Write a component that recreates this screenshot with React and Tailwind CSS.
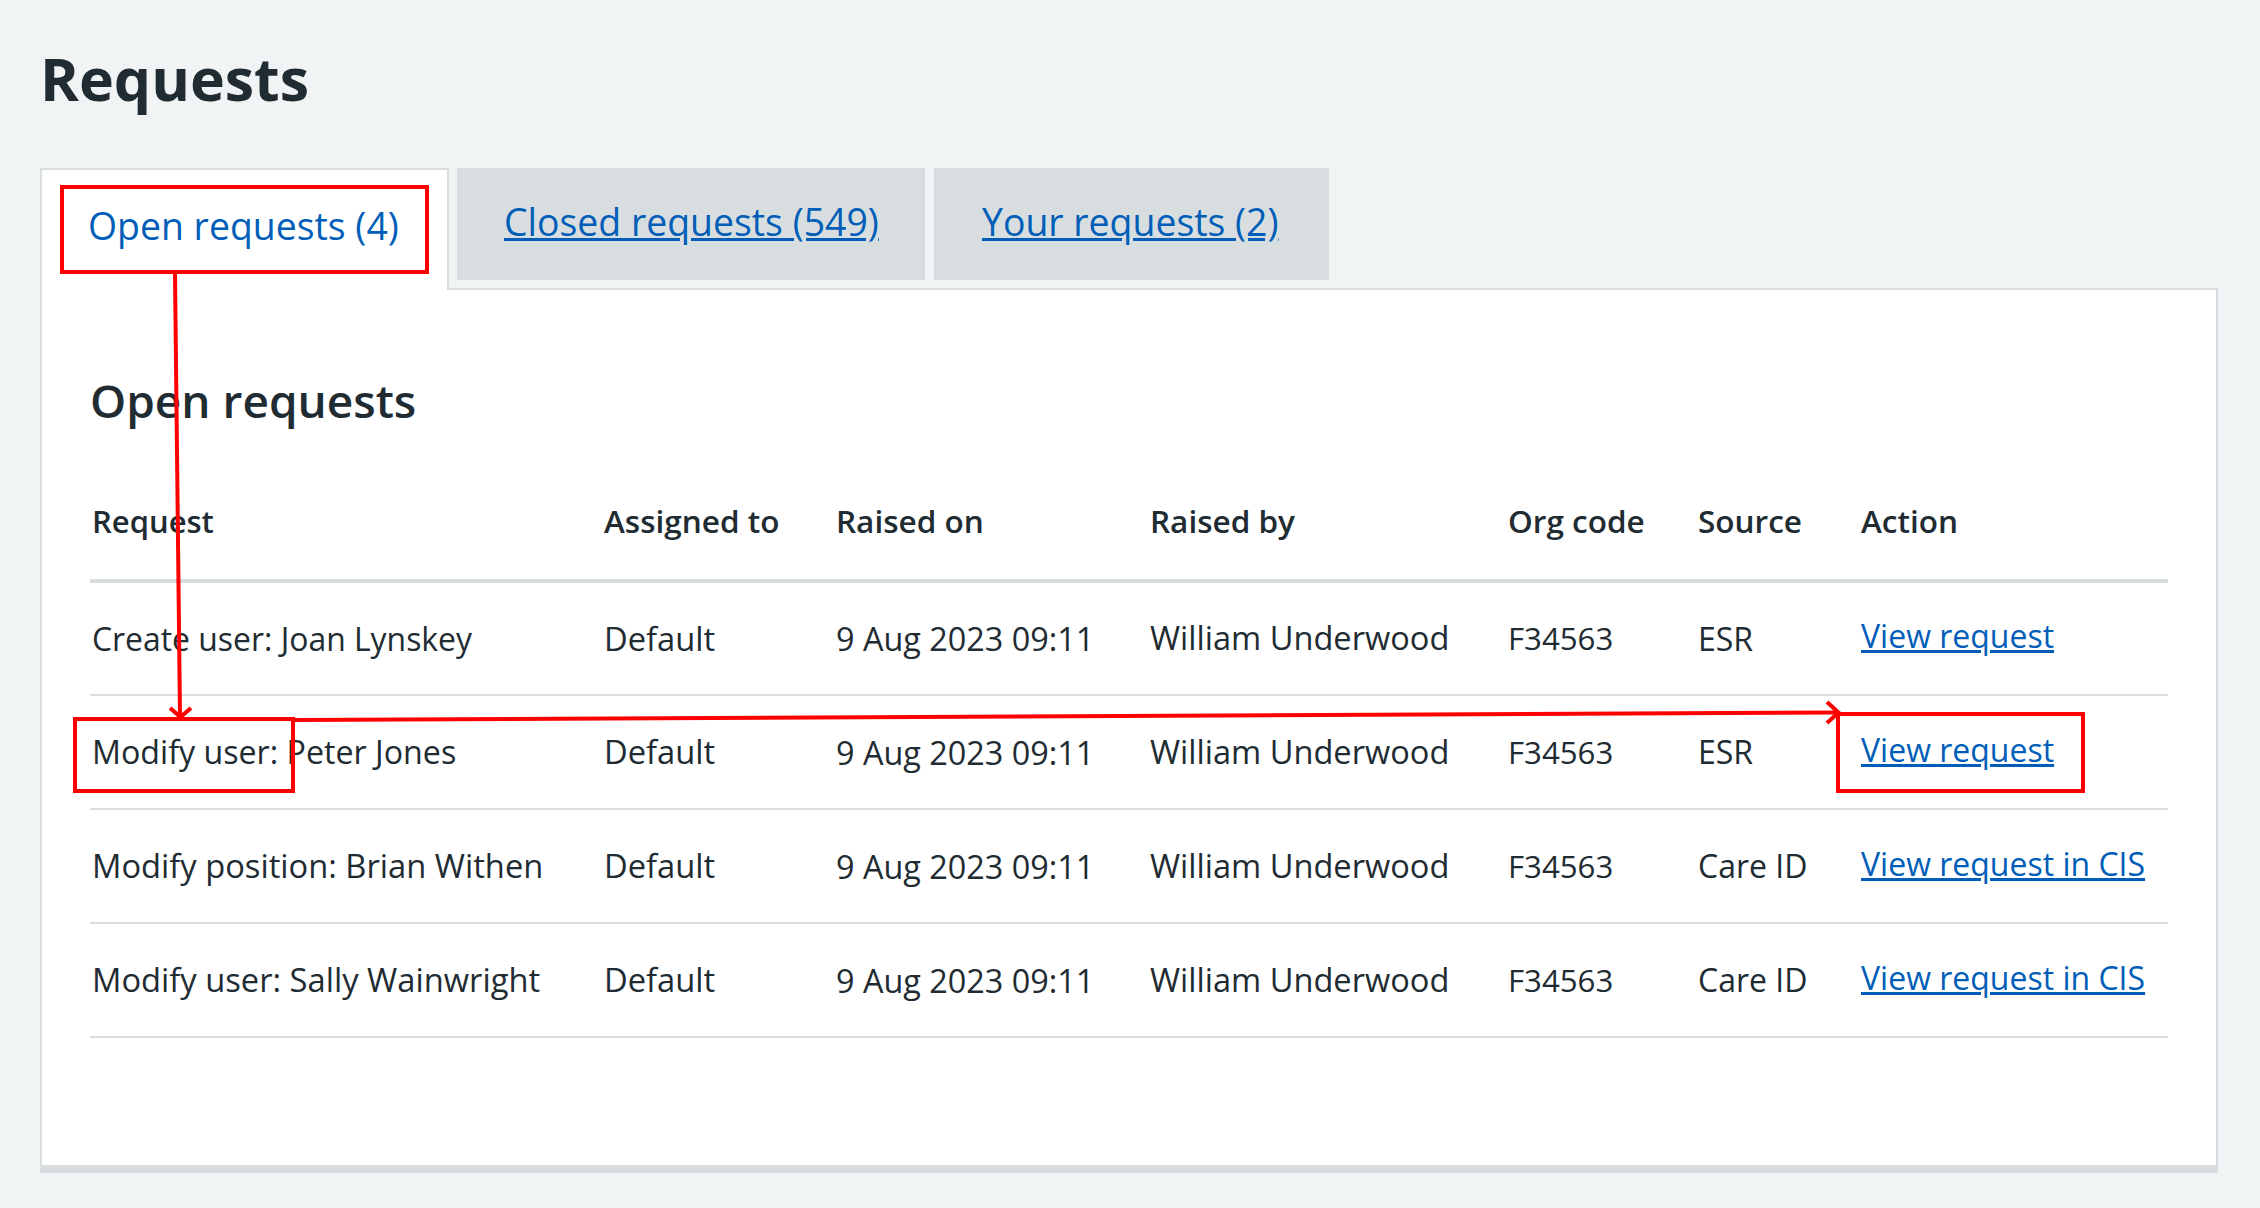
const ROWS = [
  { request: 'Create user: Joan Lynskey', size: 'text-[31.900px]', source: 'ESR', action: 'View request' },
  { request: 'Modify user: Peter Jones', size: 'text-[32.200px]', source: 'ESR', action: 'View request' },
  { request: 'Modify position: Brian Withen', size: 'text-[32.700px]', source: 'Care ID', action: 'View request in CIS' },
  { request: 'Modify user: Sally Wainwright', size: 'text-[32.700px]', source: 'Care ID', action: 'View request in CIS' },
];

const HEADERS = ['Request', 'Assigned to', 'Raised on', 'Raised by', 'Org code', 'Source', 'Action'];

function Annotations() {
  return (
    <>
      <div className="absolute left-[60px] top-[185px] h-[89px] w-[369px] border-4 border-[#ff0000]" />
      <div className="absolute left-[73px] top-[717px] h-[76px] w-[222px] border-4 border-[#ff0000]" />
      <div className="absolute left-[1836px] top-[712px] h-[81px] w-[249px] border-4 border-[#ff0000]" />
      <svg className="absolute left-0 top-0 h-[1208px] w-[2260px]" viewBox="0 0 2260 1208" fill="none" stroke="#ff0000" strokeWidth="4">
        <path d="M175 274 L180 717" />
        <path d="M170 708 L180.500 717 L191 708" />
        <path d="M295 720 L1838 712.500" />
        <path d="M1827 702 L1838.500 712.500 L1827 723" />
      </svg>
    </>
  );
}

export default function App() {
  return (
    <div className="relative min-h-screen bg-[#f0f4f5] pl-[40px] pr-[42px] pt-[46px] font-['Open_Sans',sans-serif] text-[#212b32]">
      <h1 className="mb-[58px] text-[59px] font-bold leading-[64px]">Requests</h1>

      <div className="relative flex gap-2">
        <div className="-mb-[2px] h-[122px] w-[409px] border-2 border-b-0 border-[#d8dde0] bg-white pl-[46px] pt-[28px] text-[37.400px] leading-[56px] text-[#005eb8]">
          Open requests (4)
        </div>
        <div className="h-[112px] w-[468px] bg-[#d8dde0] pl-[47px] pt-[26px] text-[37.400px] leading-[56px]">
          <a href="#" className="text-[#005eb8] underline">Closed requests (549)</a>
        </div>
        <div className="ml-px h-[112px] w-[395px] bg-[#d8dde0] pl-[48px] pt-[26px] text-[37.400px] leading-[56px]">
          <a href="#" className="text-[#005eb8] underline">Your requests (2)</a>
        </div>
      </div>

      <div className="border-2 border-b-8 border-[#d8dde0] bg-white pb-[127px] pl-[48px] pr-[48px] pt-[80px]">
        <h2 className="mb-[36px] text-[46px] font-semibold leading-[60px]">Open requests</h2>
        <table className="w-[2078px] table-fixed border-collapse text-left text-[32px]">
          <colgroup>
            <col className="w-[513px]" />
            <col className="w-[232px]" />
            <col className="w-[314px]" />
            <col className="w-[358px]" />
            <col className="w-[190px]" />
            <col className="w-[163px]" />
            <col className="w-[308px]" />
          </colgroup>
          <thead>
            <tr className="h-[115px] border-b-4 border-[#d8dde0]">
              {HEADERS.map((h, i) => (
                <th key={h} className={i === 0 ? 'whitespace-nowrap pb-[3px] pl-[2px] text-[31px] font-semibold' : 'whitespace-nowrap pb-[3px] pl-px text-[31.500px] font-semibold'}>{h}</th>
              ))}
            </tr>
          </thead>
          <tbody>
            {ROWS.map((row) => (
              <tr key={row.request} className="h-[114px] border-b-2 border-[#d8dde0]">
                <td className={`whitespace-nowrap pl-[2px] ${row.size}`}>{row.request}</td>
                <td className="whitespace-nowrap pl-px text-[32.700px]">Default</td>
                <td className="whitespace-nowrap pl-px text-[32.400px]">9 Aug 2023 09:11</td>
                <td className="whitespace-nowrap pl-px text-[32.600px]">William Underwood</td>
                <td className="whitespace-nowrap pl-px text-[31.200px]">F34563</td>
                <td className="whitespace-nowrap pl-px">{row.source}</td>
                <td className="whitespace-nowrap pb-[5px] pl-px">
                  <a href="#" className="text-[#005eb8] underline">{row.action}</a>
                </td>
              </tr>
            ))}
          </tbody>
        </table>
      </div>

      <Annotations />
    </div>
  );
}
